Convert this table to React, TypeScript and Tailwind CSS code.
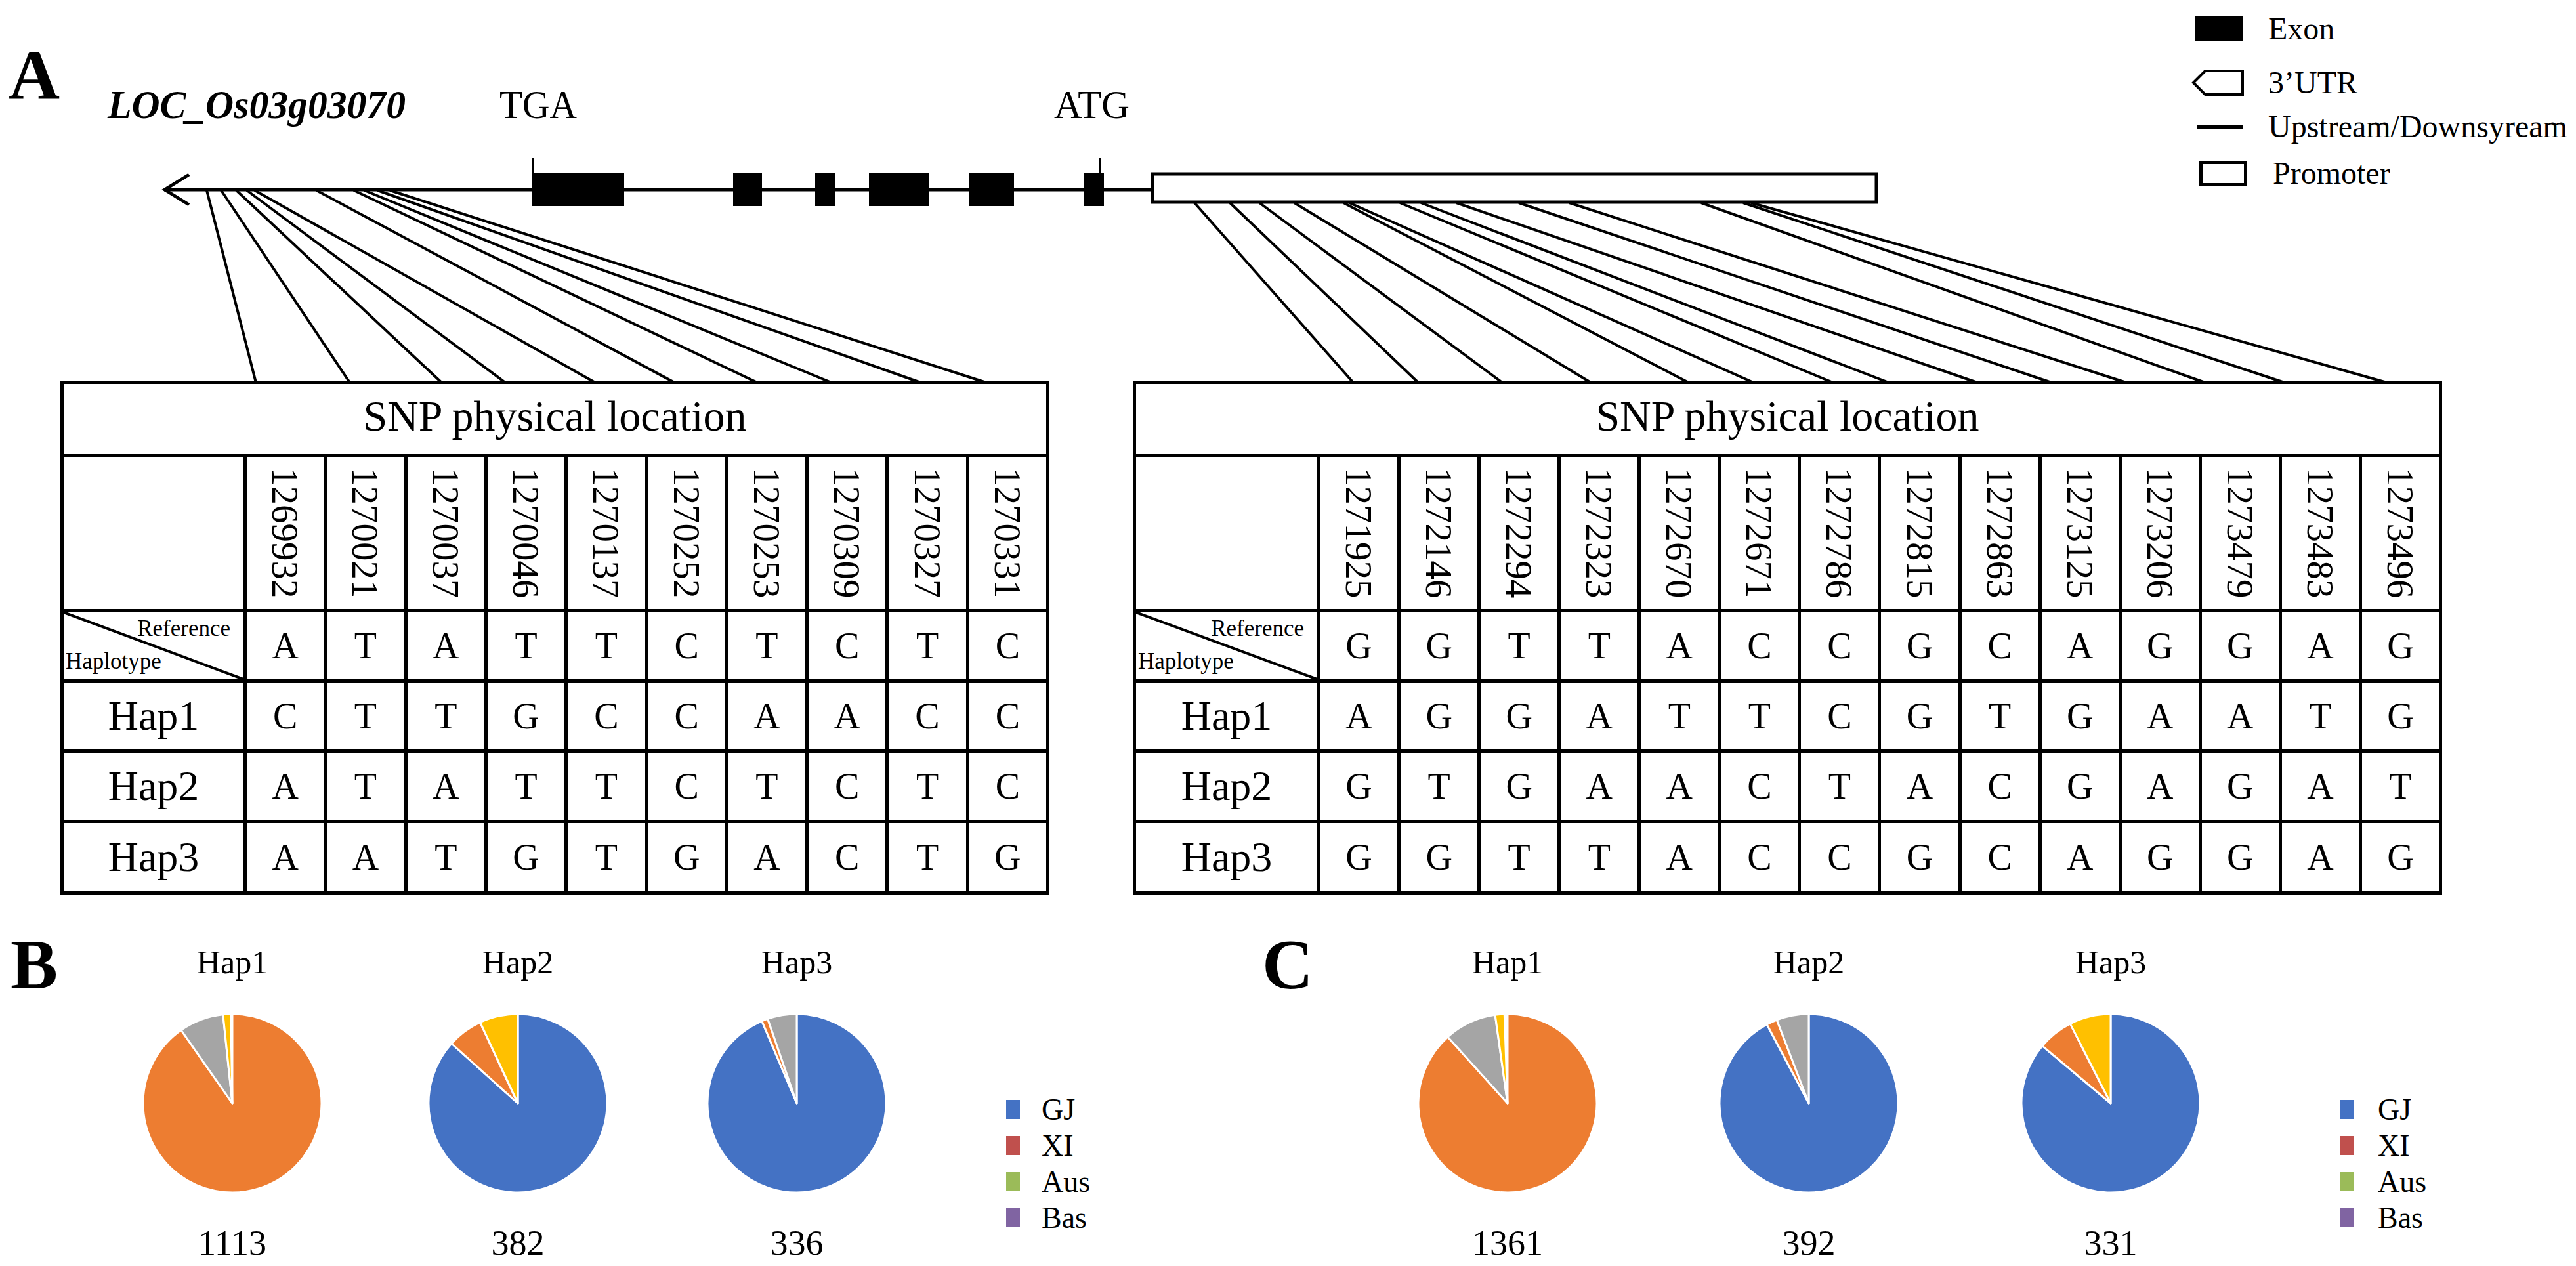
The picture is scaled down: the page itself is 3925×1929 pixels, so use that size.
import React from "react";

type Slice = { deg: number; color: string };

const ORANGE = "#ED7D31";
const BLUE = "#4472C4";
const GRAY = "#A5A5A5";
const YELLOW = "#FFC000";

const leftLines: [number, number][] = [
  [315, 390], [337, 533], [360, 673], [376, 770], [388, 907],
  [482, 1028], [539, 1154], [555, 1267], [575, 1403], [594, 1503],
];
const rightLines: [number, number][] = [
  [1820, 2062], [1874, 2161], [1919, 2289], [1972, 2424], [2047, 2573], [2056, 2672], [2133, 2793],
  [2165, 2878], [2219, 3013], [2314, 3126], [2391, 3240], [2592, 3360], [2656, 3481], [2668, 3637],
];
const exons: [number, number][] = [
  [810, 951], [1117, 1161], [1242, 1273], [1324, 1415], [1476, 1545], [1652, 1682],
];

const leftTable = {
  cols: "grid-cols-[274px_repeat(10,1fr)]",
  width: "w-[1507px]",
  pos: ["1269932", "1270021", "1270037", "1270046", "1270137", "1270252", "1270253", "1270309", "1270327", "1270331"],
  ref: "ATATTCTCTC",
  haps: ["CTTGCCAACC", "ATATTCTCTC", "AATGTGACTG"],
};
const rightTable = {
  cols: "grid-cols-[276px_repeat(14,1fr)]",
  width: "w-[1995px]",
  pos: ["1271925", "1272146", "1272294", "1272323", "1272670", "1272671", "1272786", "1272815", "1272863", "1273125", "1273206", "1273479", "1273483", "1273496"],
  ref: "GGTTACCGCAGGAG",
  haps: ["AGGATTCGTGAATG", "GTGAACTACGAGAT", "GGTTACCGCAGGAG"],
};

function slicePath(cx: number, cy: number, r: number, a0: number, a1: number) {
  const p = (a: number) => [cx + r * Math.sin((a * Math.PI) / 180), cy - r * Math.cos((a * Math.PI) / 180)];
  const [x0, y0] = p(a0);
  const [x1, y1] = p(a1);
  const large = a1 - a0 > 180 ? 1 : 0;
  return `M${cx},${cy} L${x0},${y0} A${r},${r} 0 ${large} 1 ${x1},${y1} Z`;
}

function Pie({ slices }: { slices: Slice[] }) {
  let a = 0;
  return (
    <svg width={276} height={276} className="block">
      {slices.map((s, i) => {
        const d = slicePath(138, 138, 136, a, a + s.deg);
        a += s.deg;
        return <path key={i} d={d} fill={s.color} stroke="#fff" strokeWidth={3} strokeLinejoin="round" />;
      })}
    </svg>
  );
}

function PieCol({ label, count, slices, className }: { label: string; count: string; slices: Slice[]; className: string }) {
  return (
    <div className={`flex flex-col items-center w-[300px] ${className}`}>
      <div className="mt-[25px] text-[50px] leading-none">{label}</div>
      <div className="mt-[52px]"><Pie slices={slices} /></div>
      <div className="mt-[48px] text-[54px] leading-none">{count}</div>
    </div>
  );
}

function PieLegend({ className, textGap }: { className: string; textGap: string }) {
  const items = [
    { name: "GJ", color: "bg-[#4472C4]" },
    { name: "XI", color: "bg-[#C0504D]" },
    { name: "Aus", color: "bg-[#9BBB59]" },
    { name: "Bas", color: "bg-[#8064A2]" },
  ];
  return (
    <div className={`flex flex-col ${className}`}>
      {items.map(it => (
        <div key={it.name} className="flex items-center h-[55px]">
          <div className={`w-[21px] h-[29px] ${it.color}`} />
          <span className={`${textGap} text-[46px] leading-none`}>{it.name}</span>
        </div>
      ))}
    </div>
  );
}

function SnpTable({ t }: { t: typeof leftTable }) {
  return (
    <div className={`grid ${t.cols} ${t.width} grid-rows-[106px_232px_102px_102px_102px_104px] gap-[5px] p-[5px] bg-black`}>
      <div className="col-span-full bg-white flex items-center justify-center pb-[8px] text-[66px] leading-none">
        SNP physical location
      </div>

      <div className="bg-white" />
      {t.pos.map(p => (
        <div key={p} className="bg-white flex justify-center pt-[16px]">
          <span className="[writing-mode:vertical-rl] text-[57px] leading-none">{p}</span>
        </div>
      ))}

      <div className="relative bg-white flex flex-col">
        <svg className="absolute inset-0 w-full h-full" preserveAspectRatio="none" viewBox="0 0 100 100">
          <line x1="0" y1="0" x2="100" y2="100" stroke="#000" strokeWidth={4} vectorEffect="non-scaling-stroke" />
        </svg>
        <div className="pt-[7px] pr-[20px] text-right text-[35px] leading-none">Reference</div>
        <div className="mt-[15px] pl-[3px] text-left text-[35px] leading-none">Haplotype</div>
      </div>
      {t.ref.split("").map((b, i) => (
        <div key={i} className="bg-white flex items-center justify-center text-[56px] leading-none">{b}</div>
      ))}

      {t.haps.map((h, hi) => (
        <React.Fragment key={hi}>
          <div className="bg-white flex items-center justify-center text-[64px] leading-none">Hap{hi + 1}</div>
          {h.split("").map((b, i) => (
            <div key={i} className="bg-white flex items-center justify-center text-[56px] leading-none">{b}</div>
          ))}
        </React.Fragment>
      ))}
    </div>
  );
}

function GeneDiagram() {
  return (
    <svg width={3925} height={580} className="block overflow-visible">
      <text x={164} y={180} fontSize={62} fontWeight="bold" fontStyle="italic" textLength={454} lengthAdjust="spacingAndGlyphs">
        LOC_Os03g03070
      </text>
      <text x={761} y={180} fontSize={62} textLength={118} lengthAdjust="spacingAndGlyphs">TGA</text>
      <text x={1606} y={180} fontSize={62} textLength={115} lengthAdjust="spacingAndGlyphs">ATG</text>

      {/* gene body */}
      <line x1={250} y1={289} x2={1756} y2={289} stroke="#000" strokeWidth={5} />
      <polyline points="288,266 251,289 288,312" fill="none" stroke="#000" strokeWidth={5} />
      {exons.map(([a, b]) => (
        <rect key={a} x={a} y={264} width={b - a} height={50} fill="#000" />
      ))}
      <line x1={812} y1={241} x2={812} y2={289} stroke="#000" strokeWidth={3} />
      <line x1={1676} y1={241} x2={1676} y2={289} stroke="#000" strokeWidth={3} />
      <rect x={1756} y={265} width={1103} height={43} fill="#fff" stroke="#000" strokeWidth={5} />

      {/* SNP connectors */}
      {leftLines.map(([a, b]) => (
        <line key={a} x1={a} y1={290} x2={b} y2={583} stroke="#000" strokeWidth={4} />
      ))}
      {rightLines.map(([a, b]) => (
        <line key={a} x1={a} y1={309} x2={b} y2={583} stroke="#000" strokeWidth={4} />
      ))}
    </svg>
  );
}

function GeneLegend() {
  return (
    <div className="absolute left-[3339px] top-[20px] flex flex-col text-[48px] leading-none">
      <div className="flex items-center h-[48px]">
        <div className="w-[117px] pl-[6px]"><div className="w-[73px] h-[38px] bg-black" /></div>
        <span>Exon</span>
      </div>
      <div className="flex items-center h-[48px] mt-[34px]">
        <div className="w-[117px]">
          <svg width={80} height={40} className="block">
            <polygon points="3,20 21,2 78,2 78,38 21,38" fill="#fff" stroke="#000" strokeWidth={4} />
          </svg>
        </div>
        <span>3’UTR</span>
      </div>
      <div className="flex items-center h-[48px] mt-[19px]">
        <div className="w-[117px] pl-[8px]"><div className="w-[70px] h-[5px] bg-black" /></div>
        <span>Upstream/Downsyream</span>
      </div>
      <div className="flex items-center h-[48px] mt-[23px]">
        <div className="w-[124px] pl-[12px]"><div className="w-[73px] h-[39px] border-[5px] border-black bg-white" /></div>
        <span>Promoter</span>
      </div>
    </div>
  );
}

export default function App() {
  return (
    <div className="w-[3925px] h-[1929px] bg-white overflow-hidden text-black font-['Liberation_Serif','Times_New_Roman',serif]">
      <div className="relative h-[580px]">
        <GeneDiagram />
        <div className="absolute left-[13px] top-[61px] text-[108px] font-bold leading-none">A</div>
        <GeneLegend />
      </div>

      <div className="flex pl-[92px] gap-[127px]">
        <SnpTable t={leftTable} />
        <SnpTable t={rightTable} />
      </div>

      <div className="flex mt-[53px]">
        <div className="flex items-start w-[1921px] pl-[16px]">
          <div className="w-[82px] text-[108px] font-bold leading-none">B</div>
          <PieCol label="Hap1" count="1113" className="ml-[106px]"
            slices={[{ deg: 325, color: ORANGE }, { deg: 29, color: GRAY }, { deg: 5, color: YELLOW }]} />
          <PieCol label="Hap2" count="382" className="ml-[135px]"
            slices={[{ deg: 312, color: BLUE }, { deg: 23, color: ORANGE }, { deg: 25, color: YELLOW }]} />
          <PieCol label="Hap3" count="336" className="ml-[125px]"
            slices={[{ deg: 337, color: BLUE }, { deg: 4, color: ORANGE }, { deg: 19, color: GRAY }]} />
          <PieLegend className="ml-[169px] mt-[247px]" textGap="ml-[33px]" />
        </div>
        <div className="flex items-start pl-[2px]">
          <div className="w-[80px] text-[108px] font-bold leading-none">C</div>
          <PieCol label="Hap1" count="1361" className="ml-[144px]"
            slices={[{ deg: 318, color: ORANGE }, { deg: 34, color: GRAY }, { deg: 6, color: YELLOW }]} />
          <PieCol label="Hap2" count="392" className="ml-[159px]"
            slices={[{ deg: 332, color: BLUE }, { deg: 7, color: ORANGE }, { deg: 21, color: GRAY }]} />
          <PieCol label="Hap3" count="331" className="ml-[160px]"
            slices={[{ deg: 310, color: BLUE }, { deg: 23, color: ORANGE }, { deg: 27, color: YELLOW }]} />
          <PieLegend className="ml-[200px] mt-[247px]" textGap="ml-[36px]" />
        </div>
      </div>
    </div>
  );
}
